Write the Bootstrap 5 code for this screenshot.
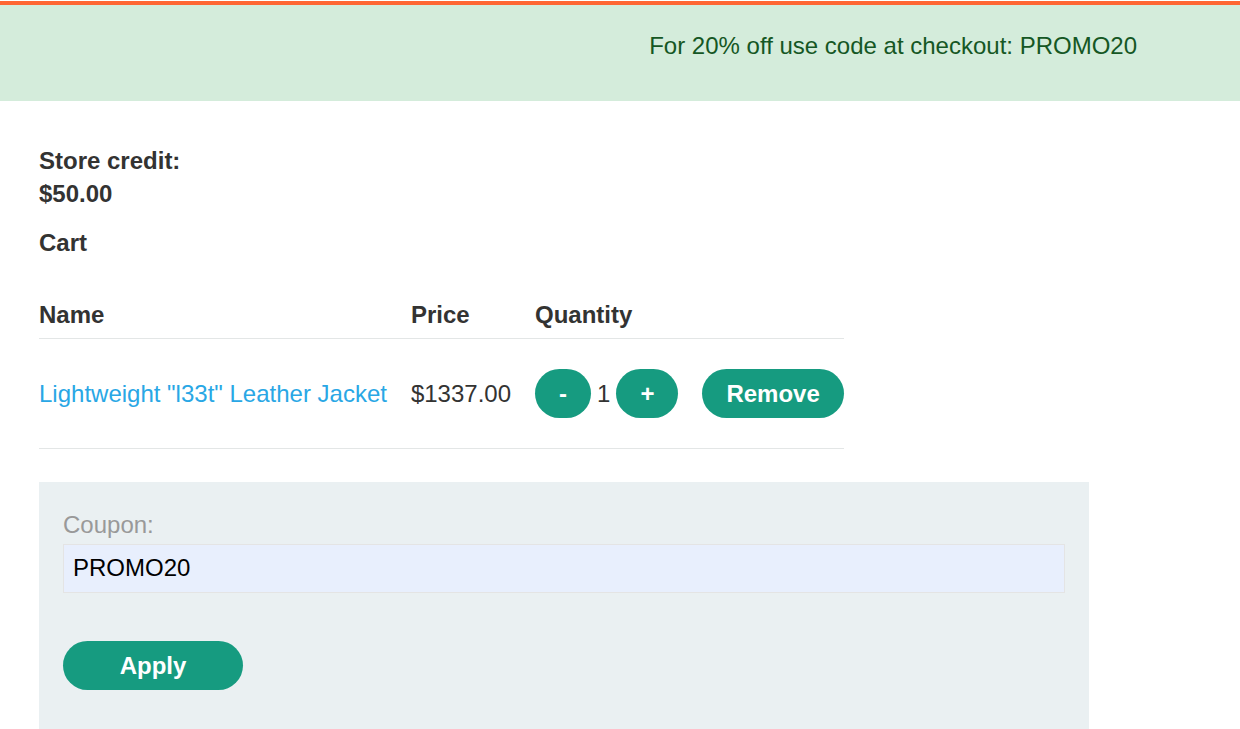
<!DOCTYPE html>
<html lang="en">
<head>
<meta charset="utf-8">
<meta name="viewport" content="width=device-width, initial-scale=1">
<title>Cart</title>
<link href="https://cdn.jsdelivr.net/npm/bootstrap@5.3.0/dist/css/bootstrap.min.css" rel="stylesheet">
<style>
body { font-family: "Liberation Sans", Arial, sans-serif; font-size: 24px; line-height: 33px; color: #333332; padding-top: 1px; }
.promo { border-top: 4px solid #ff6633; background: #d4ecdb; color: #155724; padding: 24px 103px 39px 24px; }
.shop { padding: 43px 151px 0 39px; }
.heading { font-size: 24px; line-height: 33px; font-weight: 700; }
.cart-table { border-collapse: collapse; margin: 39px 0 33px; white-space: nowrap; }
.cart-table th { padding: 0 24px 7px 0; border-bottom: 1px solid #e3e6e6; }
.cart-table td { padding: 30px 24px 30px 0; border-bottom: 1px solid #e3e6e6; vertical-align: middle; }
.cart-table th:last-child, .cart-table td:last-child { padding-right: 0; }
.cart-table a { color: #29a7e5; }
.pill, .pill:hover { background: #169b80; color: #fff; border: 0; border-radius: 25px; font-size: 24px; font-weight: 700; line-height: 33px; padding: 8px 24px; }
.pill-wide { min-width: 180px; }
.qty { gap: 6px; }
.coupon { background: #eaf0f2; padding: 26px 24px 39px; }
.coupon label { color: #999; margin-bottom: 3px; }
.coupon .form-control { background: #e8effd; border: 1px solid #e4e4e4; border-radius: 0; color: #000; font-size: 24px; line-height: 33px; padding: 6px 9px 8px; margin-bottom: 48px; }
</style>
</head>
<body>
<div class="promo d-flex justify-content-end">
  <p class="m-0">For 20% off use code at checkout: PROMO20</p>
</div>
<main class="shop">
  <p class="heading mb-3">Store credit:<br>$50.00</p>
  <h1 class="heading mb-0">Cart</h1>
  <table class="cart-table">
    <thead>
      <tr><th scope="col">Name</th><th scope="col">Price</th><th scope="col">Quantity</th><th></th></tr>
    </thead>
    <tbody>
      <tr>
        <td><a href="#" class="text-decoration-none">Lightweight "l33t" Leather Jacket</a></td>
        <td>$1337.00</td>
        <td>
          <div class="qty d-flex align-items-center">
            <button type="button" class="btn pill" aria-label="Decrease quantity">-</button>
            <span>1</span>
            <button type="button" class="btn pill" aria-label="Increase quantity">+</button>
          </div>
        </td>
        <td><button type="button" class="btn pill d-block">Remove</button></td>
      </tr>
    </tbody>
  </table>
  <form class="coupon">
    <label for="coupon" class="d-block">Coupon:</label>
    <input id="coupon" type="text" class="form-control" value="PROMO20">
    <button type="button" class="btn pill pill-wide">Apply</button>
  </form>
</main>
<script src="https://cdn.jsdelivr.net/npm/bootstrap@5.3.0/dist/js/bootstrap.bundle.min.js"></script>
</body>
</html>
